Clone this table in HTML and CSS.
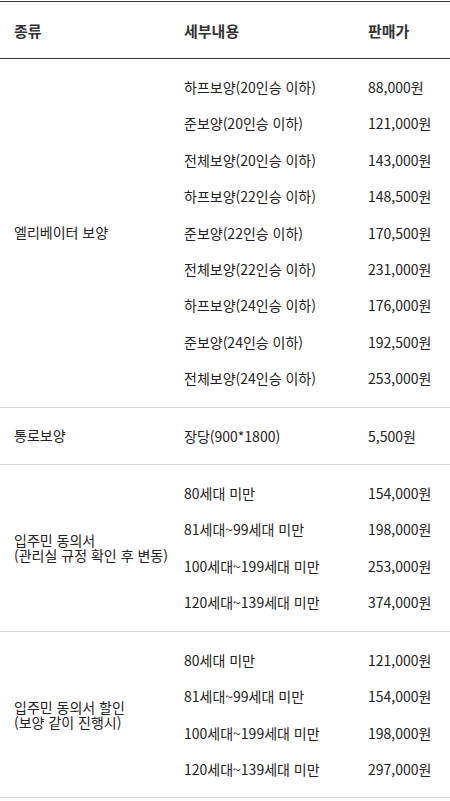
FILE: index.html
```
<!DOCTYPE html>
<html lang="ko">
<head>
  <meta charset="UTF-8" />
  <meta name="viewport" content="width=device-width, initial-scale=1.0"/>
  <title>보양 판매가</title>
  <link rel="stylesheet" href="styles.css">
</head>
<body>
  <table class="price-table">
    <thead>
      <tr>
        <th class="col-kind">종류</th>
        <th class="col-detail">세부내용</th>
        <th class="col-price">판매가</th>
      </tr>
    </thead>
    <tbody>
      <tr>
        <td class="kind">엘리베이터 보양</td>
        <td class="list">
          <div>하프보양(20인승 이하)</div>
          <div>준보양(20인승 이하)</div>
          <div>전체보양(20인승 이하)</div>
          <div>하프보양(22인승 이하)</div>
          <div>준보양(22인승 이하)</div>
          <div>전체보양(22인승 이하)</div>
          <div>하프보양(24인승 이하)</div>
          <div>준보양(24인승 이하)</div>
          <div>전체보양(24인승 이하)</div>
        </td>
        <td class="list">
          <div>88,000원</div>
          <div>121,000원</div>
          <div>143,000원</div>
          <div>148,500원</div>
          <div>170,500원</div>
          <div>231,000원</div>
          <div>176,000원</div>
          <div>192,500원</div>
          <div>253,000원</div>
        </td>
      </tr>
      <tr>
        <td class="kind">통로보양</td>
        <td class="list"><div>장당(900*1800)</div></td>
        <td class="list"><div>5,500원</div></td>
      </tr>
      <tr>
        <td class="kind">입주민 동의서<br>(관리실 규정 확인 후 변동)</td>
        <td class="list">
          <div>80세대 미만</div>
          <div>81세대~99세대 미만</div>
          <div>100세대~199세대 미만</div>
          <div>120세대~139세대 미만</div>
        </td>
        <td class="list">
          <div>154,000원</div>
          <div>198,000원</div>
          <div>253,000원</div>
          <div>374,000원</div>
        </td>
      </tr>
      <tr>
        <td class="kind">입주민 동의서 할인<br>(보양 같이 진행시)</td>
        <td class="list">
          <div>80세대 미만</div>
          <div>81세대~99세대 미만</div>
          <div>100세대~199세대 미만</div>
          <div>120세대~139세대 미만</div>
        </td>
        <td class="list">
          <div>121,000원</div>
          <div>154,000원</div>
          <div>198,000원</div>
          <div>297,000원</div>
        </td>
      </tr>
    </tbody>
  </table>
</body>
</html>
```

FILE: styles.css
```
body {
  margin: 0;
  padding-top: 1px;
  background: #fff;
  color: #222;
  font-family: "Noto Sans CJK KR", "Noto Sans", sans-serif;
}

.price-table {
  width: 450px;
  border-collapse: collapse;
  table-layout: fixed;
  border-top: 1px solid #333;
}

.price-table th,
.price-table td {
  text-align: left;
  padding: 10px 0 10px 14px;
  vertical-align: middle;
}

.price-table th {
  height: 36px;
  font-size: 15px;
  font-weight: bold;
  color: #333;
  border-bottom: 1px solid #333;
}

.col-kind { width: 156px; }
.col-detail { width: 170px; }

.price-table td {
  font-size: 14px;
  border-bottom: 1px solid #d8d8e0;
}

.kind {
  line-height: 15px;
}

.list div {
  line-height: 36.4px;
}
```
